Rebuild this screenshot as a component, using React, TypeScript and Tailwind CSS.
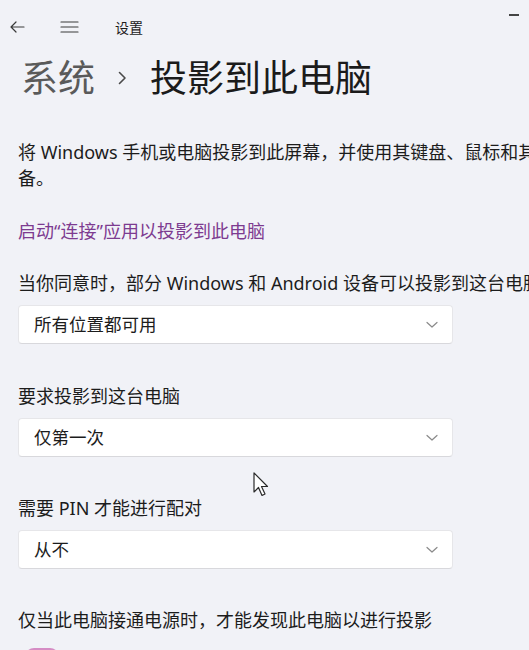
import React from 'react';

const font = { fontFamily: '"Noto Sans", "Noto Sans CJK SC", sans-serif' };

const Chevron = () => (
    <svg width="12" height="8" viewBox="0 0 12 8" fill="none">
        <path d="M1 1.5 L6 6 L11 1.5" stroke="#8a8a8a" strokeWidth="1.2" strokeLinecap="round" strokeLinejoin="round" />
    </svg>
);

const Dropdown = ({ value }: { value: string }) => (
    <div className="w-[435px] h-[39px] ml-[18px] bg-white border border-[#e6e6e9] border-b-[#d8d8dc] rounded-[4px] flex items-center justify-between pl-[15px] pr-[14px]">
        <span className="text-[17.5px] text-[#1c1c1c]">{value}</span>
        <Chevron />
    </div>
);

const Label = ({ children, className = '' }: { children: React.ReactNode; className?: string }) => (
    <div className={`pl-[18px] text-[18px] leading-[24px] text-[#1c1c1c] whitespace-nowrap ${className}`}>{children}</div>
);

export default function App() {
    return (
        <div style={font} className="relative w-[529px] h-[650px] overflow-hidden bg-[#f1f2f7]">
            {/* 标题栏 */}
            <div className="h-[54px] flex items-center pl-[10px]">
                <svg width="15" height="12" viewBox="0 0 15 12" fill="none">
                    <path d="M14 6 H1.5 M6 1 L1 6 L6 11" stroke="#3a3a3a" strokeWidth="1.2" strokeLinecap="round" strokeLinejoin="round" />
                </svg>
                <svg className="ml-[35px]" width="19" height="12" viewBox="0 0 19 12" fill="none">
                    <path d="M1 1 H18 M1 6 H18 M1 11 H18" stroke="#3a3a3a" strokeWidth="1.2" strokeLinecap="round" />
                </svg>
                <span className="ml-[36px] text-[14px] text-[#1c1c1c]">设置</span>
            </div>
            <div className="absolute top-[14px] left-[509px] w-[10px] h-[1.5px] bg-[#444]" />

            {/* 页面标题 */}
            <div className="mt-[2px] h-[44px] pl-[21px] flex items-center text-[37px] leading-[44px] whitespace-nowrap">
                <span className="text-[#5a5a5a]">系统</span>
                <svg className="ml-[23px] mr-[23px]" width="9" height="14" viewBox="0 0 9 14" fill="none">
                    <path d="M1.5 1.5 L7 7 L1.5 12.5" stroke="#4a4a4a" strokeWidth="1.6" strokeLinecap="round" strokeLinejoin="round" />
                </svg>
                <span className="text-[#1b1b1b]">投影到此电脑</span>
            </div>

            {/* 说明 */}
            <div className="mt-[39px] pl-[18px] text-[18px] leading-[26px] text-[#1c1c1c] whitespace-nowrap">
                <div>将 Windows 手机或电脑投影到此屏幕，并使用其键盘、鼠标和其他设</div>
                <div>备。</div>
            </div>

            <div className="mt-[28px] pl-[18px] text-[18px] leading-[24px] text-[#7d3b90] whitespace-nowrap">启动“连接”应用以投影到此电脑</div>

            <Label className="mt-[28px]">当你同意时，部分 Windows 和 Android 设备可以投影到这台电脑</Label>
            <div className="mt-[10px]"><Dropdown value="所有位置都可用" /></div>

            <Label className="mt-[40px]">要求投影到这台电脑</Label>
            <div className="mt-[10px]"><Dropdown value="仅第一次" /></div>

            <Label className="mt-[39px]">需要 PIN 才能进行配对</Label>
            <div className="mt-[10px]"><Dropdown value="从不" /></div>

            <Label className="mt-[39px]">仅当此电脑接通电源时，才能发现此电脑以进行投影</Label>
            <div className="mt-[16px] ml-[25px] w-[34px] h-[18px] rounded-full bg-[#d58cc4]" />

            {/* 鼠标指针 */}
            <svg className="absolute left-[253px] top-[472px]" width="16" height="26" viewBox="0 0 16 26" fill="none">
                <path d="M1 1 V20 L5.5 15.5 L9 23.5 L12 22 L8.5 14.5 H14.5 Z" fill="white" stroke="#2a2a2a" strokeWidth="1.2" strokeLinejoin="round" />
            </svg>
        </div>
    );
}
